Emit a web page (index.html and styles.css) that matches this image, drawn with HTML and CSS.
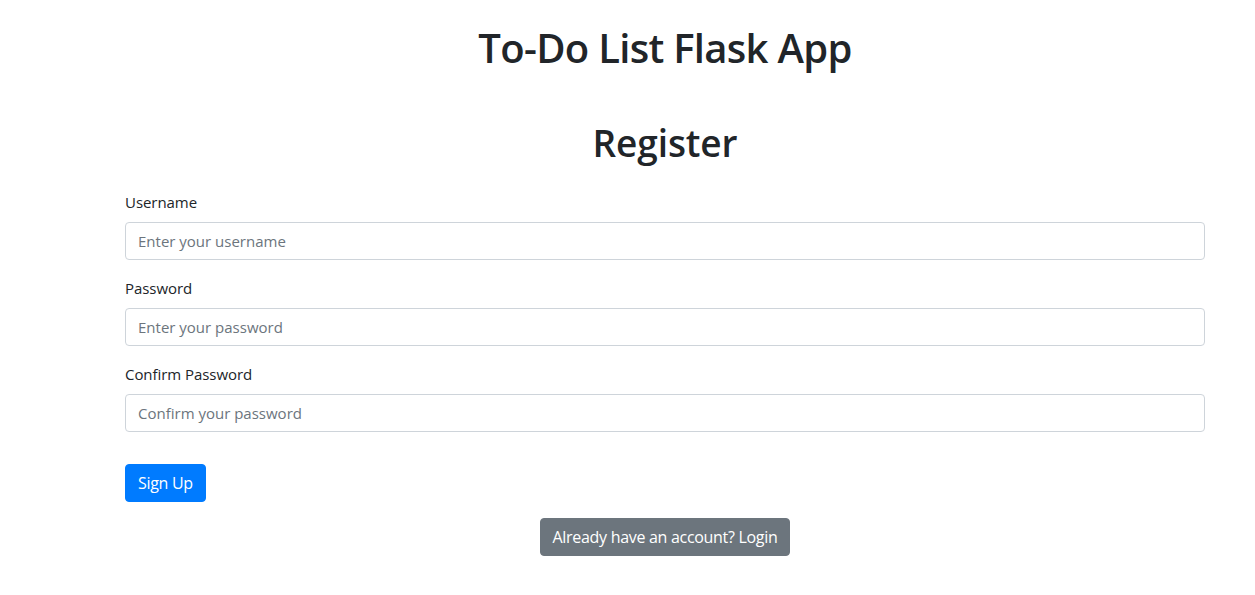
FILE: index.html
```html
<!DOCTYPE html>
<html lang="en">
<head>
<meta charset="utf-8">
<title>Register</title>
<link rel="stylesheet" href="styles.css">
</head>
<body>
<div class="page">
  <h1 class="app-title">To-Do List Flask App</h1>
  <h2 class="form-title">Register</h2>
  <form class="form">
    <div class="form-group">
      <label class="label" for="username">Username</label>
      <input class="input" id="username" type="text" placeholder="Enter your username">
    </div>
    <div class="form-group">
      <label class="label" for="password">Password</label>
      <input class="input" id="password" type="password" placeholder="Enter your password">
    </div>
    <div class="form-group">
      <label class="label" for="confirm">Confirm Password</label>
      <input class="input" id="confirm" type="password" placeholder="Confirm your password">
    </div>
    <div class="actions">
      <button class="btn btn-primary" type="button">Sign Up</button>
    </div>
  </form>
  <div class="login-row">
    <a class="btn btn-secondary" href="#">Already have an account? Login</a>
  </div>
</div>
</body>
</html>
```
FILE: styles.css
```css
* { box-sizing: border-box; }
html, body { margin: 0; padding: 0; background: #fff; }
body {
  font-family: "Open Sans", "Noto Sans", "Liberation Sans", sans-serif;
  font-size: 16px;
  line-height: 1.5;
  color: #212529;
}
.page {
  width: 1080px;
  margin-left: 125px;
  padding-top: 24px;
}
.app-title {
  margin: 0 0 8px;
  text-align: center;
  font-size: 40px;
  font-weight: 600;
  line-height: 48px;
  letter-spacing: -0.7px;
}
.form-title {
  margin: 50px 0 26px;
  text-align: center;
  font-size: 37px;
  font-weight: 600;
  line-height: 42px;
  letter-spacing: -0.1px;
}
.form-group { margin-bottom: 16px; }
.label {
  display: block;
  margin-bottom: 8px;
  font-size: 15px;
  line-height: 24px;
  letter-spacing: -0.05px;
}
.input {
  display: block;
  width: 100%;
  height: 38px;
  padding: 6px 12px;
  font-family: inherit;
  font-size: 15px;
  letter-spacing: 0;
  color: #495057;
  background: #fff;
  border: 1px solid #ced4da;
  border-radius: 4px;
}
.input::placeholder { color: #6c757d; opacity: 1; }
.actions { padding-top: 16px; }
.btn {
  display: inline-block;
  height: 38px;
  padding: 6px 12px;
  font-family: inherit;
  font-size: 16px;
  line-height: 24px;
  letter-spacing: -0.3px;
  color: #fff;
  border: 1px solid transparent;
  border-radius: 4px;
  text-decoration: none;
  cursor: pointer;
}
.btn-primary { background: #007bff; border-color: #007bff; }
.btn-secondary { background: #6c757d; border-color: #6c757d; }
.login-row {
  margin-top: 16px;
  text-align: center;
}
```
